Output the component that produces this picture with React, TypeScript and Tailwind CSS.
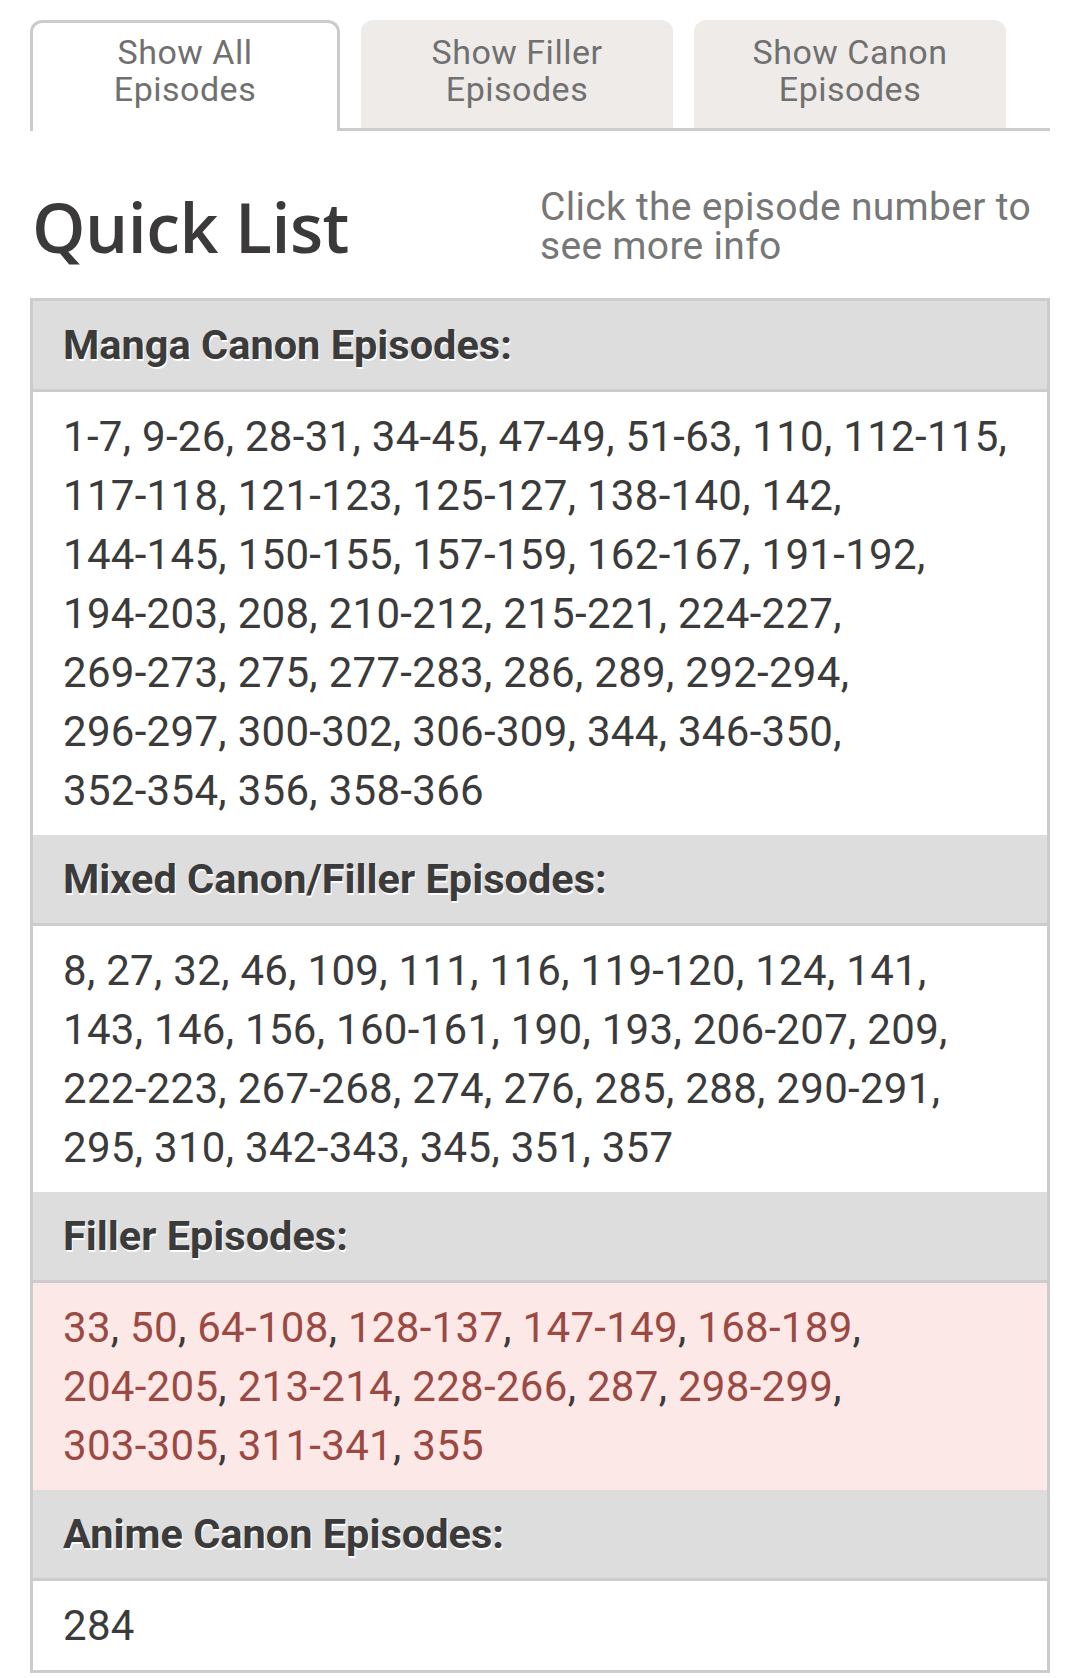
import React from "react";

type Section = {
  title: string;
  lines: string[][];
  filler?: boolean;
};

const sections: Section[] = [
  {
    title: "Manga Canon Episodes:",
    lines: [
      ["1-7", "9-26", "28-31", "34-45", "47-49", "51-63", "110", "112-115"],
      ["117-118", "121-123", "125-127", "138-140", "142"],
      ["144-145", "150-155", "157-159", "162-167", "191-192"],
      ["194-203", "208", "210-212", "215-221", "224-227"],
      ["269-273", "275", "277-283", "286", "289", "292-294"],
      ["296-297", "300-302", "306-309", "344", "346-350"],
      ["352-354", "356", "358-366"],
    ],
  },
  {
    title: "Mixed Canon/Filler Episodes:",
    lines: [
      ["8", "27", "32", "46", "109", "111", "116", "119-120", "124", "141"],
      ["143", "146", "156", "160-161", "190", "193", "206-207", "209"],
      ["222-223", "267-268", "274", "276", "285", "288", "290-291"],
      ["295", "310", "342-343", "345", "351", "357"],
    ],
  },
  {
    title: "Filler Episodes:",
    filler: true,
    lines: [
      ["33", "50", "64-108", "128-137", "147-149", "168-189"],
      ["204-205", "213-214", "228-266", "287", "298-299"],
      ["303-305", "311-341", "355"],
    ],
  },
  {
    title: "Anime Canon Episodes:",
    lines: [["284"]],
  },
];

const tabs = ["Show All", "Show Filler", "Show Canon"];

function Tabs() {
  return (
    <div className="flex items-end gap-[21px] border-b-[3px] border-[#cccccc]">
      {tabs.map((t, i) => (
        <div
          key={t}
          className={
            i === 0
              ? "relative z-10 -mb-[3px] w-[310px] h-[111px] rounded-t-[12px] border-[3px] border-b-0 border-[#cccccc] bg-white pt-[11px] text-center"
              : "w-[312px] h-[108px] rounded-t-[12px] bg-[#efebe9] pt-[14px] text-center"
          }
        >
          <div className="text-[34px] leading-[37px] text-[#707070] tracking-[0.5px]">{t}</div>
          <div className="text-[34px] leading-[37px] text-[#707070] tracking-[0.5px]">Episodes</div>
        </div>
      ))}
    </div>
  );
}

function EpisodeBlock({ section }: { section: Section }) {
  const total = section.lines.reduce((n, l) => n + l.length, 0);
  let idx = 0;
  return (
    <div>
      <div className="bg-[#dddddd] border-b-[3px] border-[#cccccc] px-[30px] py-[15px] text-[41.5px] leading-[58px] font-bold text-[#3b3b3b] [text-shadow:1px_2px_0_#ffffff]">
        {section.title}
      </div>
      <div
        className={
          (section.filler ? "bg-[#fde8e8] " : "bg-white ") +
          "px-[30px] py-[15px] text-[42px] leading-[59px] text-[#3b3b3b] tracking-[0.3px]"
        }
      >
        {section.lines.map((line, li) => (
          <div key={li} className="whitespace-nowrap">
            {line.map((item, i) => {
              idx += 1;
              const last = idx === total;
              return (
                <React.Fragment key={item}>
                  <a className={section.filler ? "text-[#9b4a43]" : "text-[#3b3b3b]"}>{item}</a>
                  {last ? "" : ","}
                  {i < line.length - 1 ? " " : ""}
                </React.Fragment>
              );
            })}
          </div>
        ))}
      </div>
    </div>
  );
}

export default function App() {
  return (
    <div className="w-[1080px] bg-white px-[30px] pt-[20px] font-['Roboto',sans-serif]">
      <Tabs />
      <div className="flex items-center justify-between h-[167px] pt-[24px]">
        <h2 className="font-['Open_Sans',sans-serif] font-semibold text-[68px] leading-none text-[#3b393a] tracking-[-0.5px] pl-[2px]">
          Quick List
        </h2>
        <p className="w-[510px] text-[39px] leading-[38.5px] text-[#777777] tracking-[0.3px]">
          Click the episode number to see more info
        </p>
      </div>
      <div className="border-[3px] border-[#cccccc]">
        {sections.map((s) => (
          <EpisodeBlock key={s.title} section={s} />
        ))}
      </div>
    </div>
  );
}
